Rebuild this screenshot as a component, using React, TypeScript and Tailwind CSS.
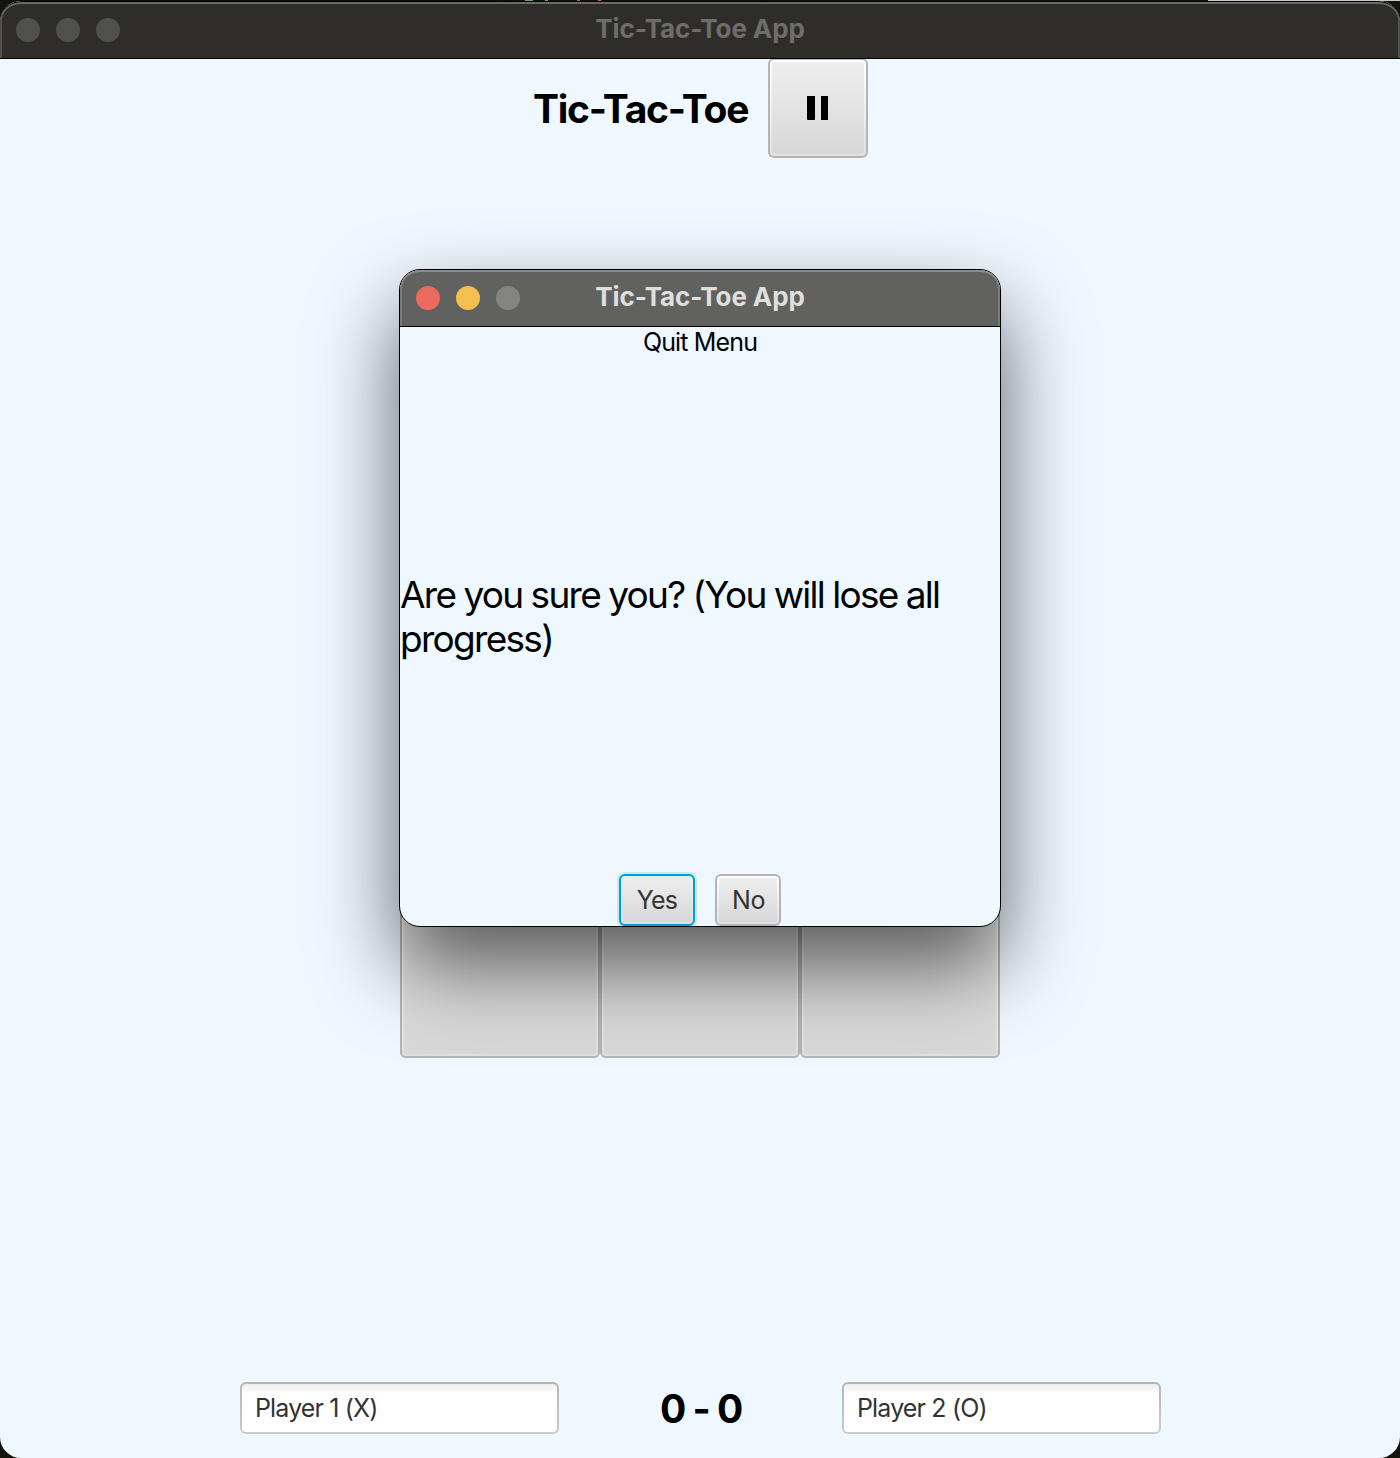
import React from "react";

function TrafficLights({ colors }: { colors: string[] }) {
  return (
    <div className="flex w-[140px] gap-4 pl-4">
      {colors.map((c, i) => (
        <span key={i} className={`size-6 rounded-full ${c}`} />
      ))}
    </div>
  );
}

function FxButton({
  className = "",
  focused = false,
  children,
}: {
  className?: string;
  focused?: boolean;
  children?: React.ReactNode;
}) {
  const ring = focused
    ? "bg-[#039ed3] shadow-[0_0_0_2px_#c9e9f7]"
    : "bg-[#b4b4b4]";
  const inner = focused
    ? "bg-linear-to-b from-[#e6f0f4] to-[#d6e3e8]"
    : "bg-linear-to-b from-white to-[#e1e1e1]";
  return (
    <button className={`flex rounded-[6px] p-[2px] ${ring} ${className}`}>
      <span className={`flex size-full rounded-[4px] p-[2px] ${inner}`}>
        <span className="flex size-full items-center justify-center rounded-[3px] bg-linear-to-b from-[#eeeeee] to-[#d8d8d8] text-[25px] leading-none text-[#333333]">
          {children}
        </span>
      </span>
    </button>
  );
}

function PlayerField({ value }: { value: string }) {
  return (
    <div className="h-[52px] w-[319px] rounded-[6px] bg-linear-to-b from-[#b5b5b5] to-[#cbcbcb] p-[2px]">
      <div className="flex size-full items-center rounded-[4px] bg-linear-to-b from-[#ececec] to-white to-[9px] pl-[13px] text-[25px] leading-none tracking-[-0.85px] text-[#333333]">
        {value}
      </div>
    </div>
  );
}

function Dialog() {
  return (
    <div className="absolute top-[269px] left-[399px] flex h-[658px] w-[602px] flex-col overflow-hidden rounded-[21px] border border-black bg-[#eff7ff] shadow-[0_40px_84px_rgba(0,0,0,0.62)]">
      <div className="flex h-[57px] shrink-0 items-center rounded-t-[20px] border-b border-black bg-[#61615f] shadow-[inset_0_2px_0_#8c8c8a,inset_2px_0_0_#797977,inset_-2px_0_0_#797977]">
        <TrafficLights colors={["bg-[#ed6a5e]", "bg-[#f5bf4f]", "bg-[#848482]"]} />
        <h2 className="flex-1 pb-[3px] text-center text-[26px] leading-[30px] font-bold tracking-[-0.1px] text-[#dfdfdc]">
          Tic-Tac-Toe App
        </h2>
        <div className="w-[140px]" />
      </div>
      <p className="h-[30px] text-center text-[25px] leading-[30px] tracking-[-0.85px]">Quit Menu</p>
      <p className="flex flex-1 items-center pt-[2px] text-[37px] leading-[44px] tracking-[-1.7px] [word-spacing:-0.6px]">
        <span className="whitespace-nowrap">
          Are you sure you? (You will lose all
          <br />
          progress)
        </span>
      </p>
      <div className="flex h-[52px] justify-center gap-5">
        <FxButton focused className="h-[52px] w-[76px] tracking-[-0.7px]">Yes</FxButton>
        <FxButton className="h-[52px] w-[66px] tracking-[-0.3px]">
          <span className="pl-[1px]">No</span>
        </FxButton>
      </div>
    </div>
  );
}

export default function App() {
  return (
    <div className="relative h-[1458px] w-[1400px] overflow-hidden bg-linear-to-r from-[#111111] from-[1208px] to-[#c3cdc4] to-[1208px] font-['Inter',sans-serif] text-black">
      <div className="flex h-px">
        <span className="ml-[525px] w-[8px] bg-[#6fa865]" />
        <span className="ml-[12px] w-[3px] bg-[#6fa865]" />
        <span className="ml-[29px] w-[3px] bg-[#c4664f]" />
        <span className="ml-[18px] w-[3px] bg-[#c4664f]" />
      </div>
      <main className="flex h-[1457px] flex-col overflow-hidden rounded-[21px] bg-[#eff7ff] shadow-[0_0_0_40px_#14140f] [clip-path:inset(0_0_0_0)]">
        <header className="relative flex h-[58px] shrink-0 items-center rounded-t-[21px] border-t border-b border-black bg-[#2e2d29] shadow-[inset_0_2px_0_#6b6b66,inset_2px_0_0_#50504c,inset_-2px_0_0_#50504c]">
          <TrafficLights colors={["bg-[#50514d]", "bg-[#50514d]", "bg-[#50514d]"]} />
          <h1 className="flex-1 pb-[2px] text-center text-[26px] leading-[30px] font-bold tracking-[-0.1px] text-[#6e6d6a]">
            Tic-Tac-Toe App
          </h1>
          <div className="w-[140px]" />
        </header>
        <div className="-mt-px flex h-[100px] shrink-0 items-center justify-center gap-5">
          <span className="w-[216px] pl-[1px] text-[39px] leading-none font-bold tracking-[-1.25px] whitespace-nowrap">
            Tic-Tac-Toe
          </span>
          <FxButton className="size-[100px]">
            <span className="mr-[1px] flex h-6 gap-[6px]">
              <span className="w-2 rounded-b-[1px] bg-black" />
              <span className="w-[7px] bg-black" />
            </span>
          </FxButton>
        </div>
        <div className="flex flex-1 items-start justify-center pt-[300px]">
          <div className="grid grid-cols-3">
            {Array.from({ length: 9 }, (_, i) => (
              <FxButton key={i} className="size-[200px]" />
            ))}
          </div>
        </div>
        <footer className="ml-[240px] flex h-[76px] shrink-0 items-start gap-[100px]">
          <PlayerField value="Player 1 (X)" />
          <span className="w-[83px] pt-[2px] pl-[1px] text-[39px] leading-[49px] font-bold tracking-[-1.5px] whitespace-nowrap">
            0 - 0
          </span>
          <PlayerField value="Player 2 (O)" />
        </footer>
      </main>
      <Dialog />
    </div>
  );
}
